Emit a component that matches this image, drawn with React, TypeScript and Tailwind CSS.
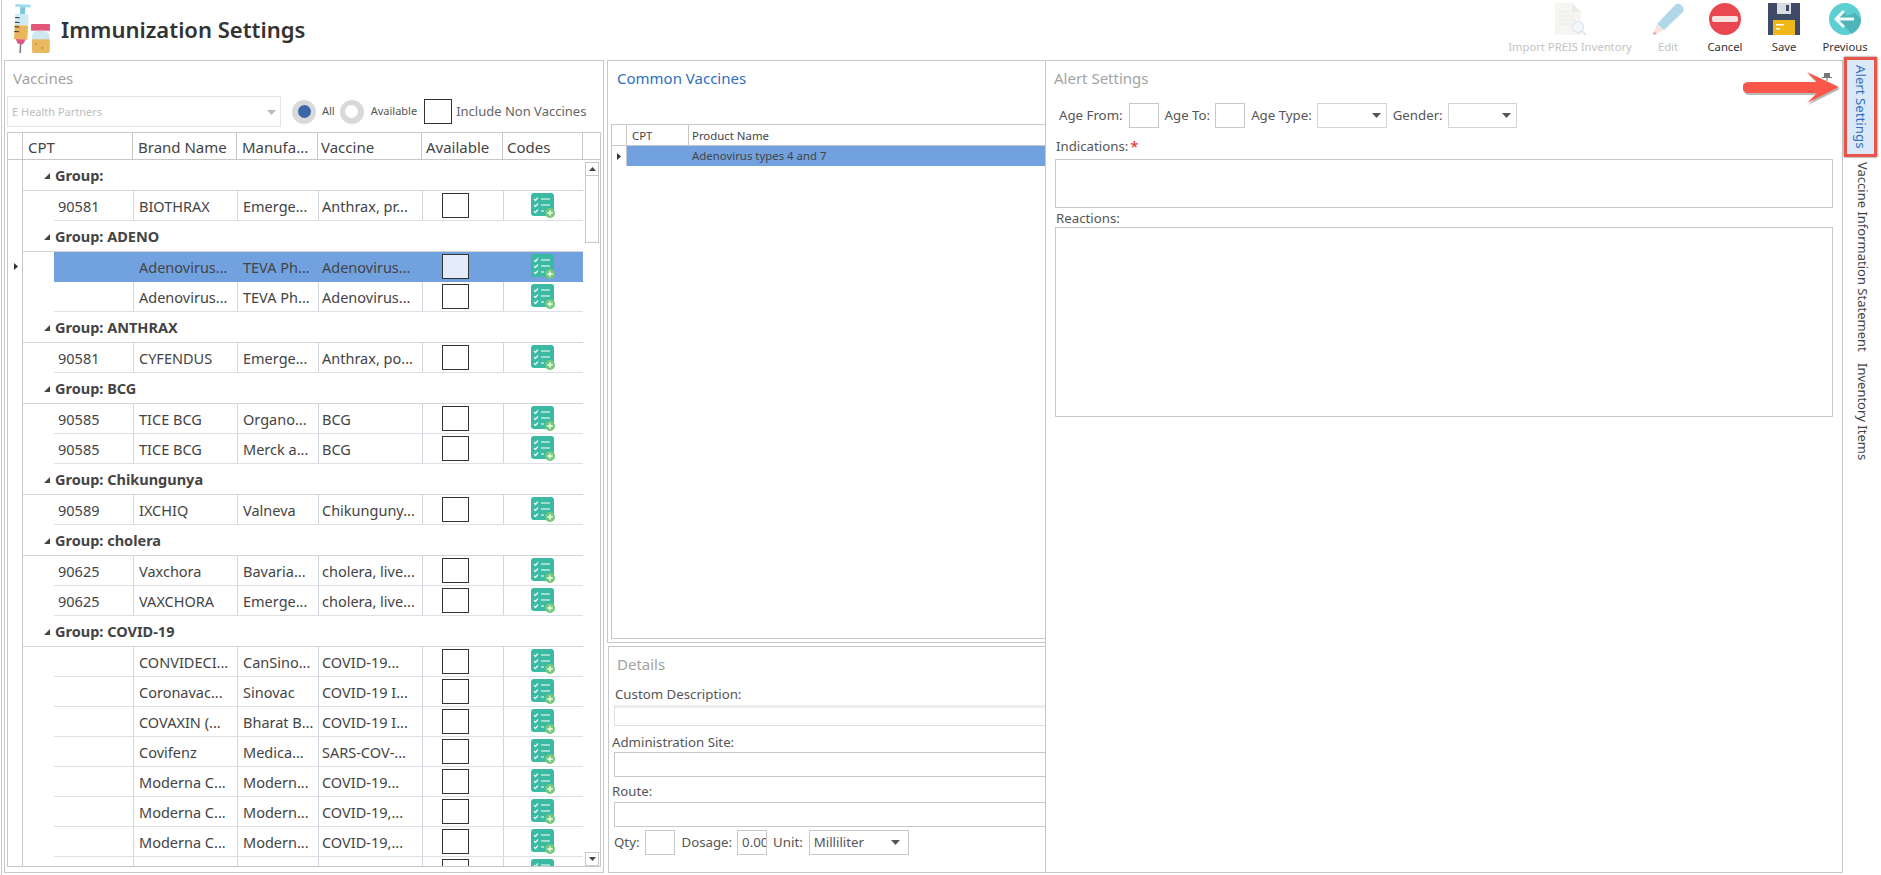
import React from 'react'

type VaccineRow = {
  cpt?: string
  brand: string
  maker: string
  vaccine: string
  selected?: boolean
}

type Section = { group: string; rows: VaccineRow[] }

const sections: Section[] = [
  { group: 'Group:', rows: [{ cpt: '90581', brand: 'BIOTHRAX', maker: 'Emerge...', vaccine: 'Anthrax, pr...' }] },
  {
    group: 'Group: ADENO',
    rows: [
      { brand: 'Adenovirus...', maker: 'TEVA Ph...', vaccine: 'Adenovirus...', selected: true },
      { brand: 'Adenovirus...', maker: 'TEVA Ph...', vaccine: 'Adenovirus...' },
    ],
  },
  { group: 'Group: ANTHRAX', rows: [{ cpt: '90581', brand: 'CYFENDUS', maker: 'Emerge...', vaccine: 'Anthrax, po...' }] },
  {
    group: 'Group: BCG',
    rows: [
      { cpt: '90585', brand: 'TICE BCG', maker: 'Organo...', vaccine: 'BCG' },
      { cpt: '90585', brand: 'TICE BCG', maker: 'Merck a...', vaccine: 'BCG' },
    ],
  },
  { group: 'Group: Chikungunya', rows: [{ cpt: '90589', brand: 'IXCHIQ', maker: 'Valneva', vaccine: 'Chikunguny...' }] },
  {
    group: 'Group: cholera',
    rows: [
      { cpt: '90625', brand: 'Vaxchora', maker: 'Bavaria...', vaccine: 'cholera, live...' },
      { cpt: '90625', brand: 'VAXCHORA', maker: 'Emerge...', vaccine: 'cholera, live...' },
    ],
  },
  {
    group: 'Group: COVID-19',
    rows: [
      { brand: 'CONVIDECI...', maker: 'CanSino...', vaccine: 'COVID-19...' },
      { brand: 'Coronavac...', maker: 'Sinovac', vaccine: 'COVID-19 I...' },
      { brand: 'COVAXIN (...', maker: 'Bharat B...', vaccine: 'COVID-19 I...' },
      { brand: 'Covifenz', maker: 'Medica...', vaccine: 'SARS-COV-...' },
      { brand: 'Moderna C...', maker: 'Modern...', vaccine: 'COVID-19...' },
      { brand: 'Moderna C...', maker: 'Modern...', vaccine: 'COVID-19,...' },
      { brand: 'Moderna C...', maker: 'Modern...', vaccine: 'COVID-19,...' },
      { brand: 'Novavax', maker: 'Novavax', vaccine: 'COVID-19,...' },
    ],
  },
]

function SyringeIcon() {
  return (
    <svg width="55" height="60" viewBox="3 0 165 180" className="shrink-0">
      <g transform="rotate(3 60 80)">
        <rect x="40" y="13" width="46" height="8" fill="#9fdcea" />
        <rect x="55" y="21" width="15" height="22" fill="#7cc7dc" />
        <rect x="41" y="42" width="40" height="34" fill="#cfeaf4" />
        <rect x="41" y="76" width="40" height="42" fill="#e9b65c" />
        <rect x="41" y="52" width="14" height="3" fill="#333" />
        <rect x="41" y="66" width="14" height="3" fill="#333" />
        <rect x="41" y="80" width="14" height="3" fill="#333" />
        <rect x="41" y="94" width="14" height="3" fill="#333" />
        <path d="M46 118h30l-7 14H53z" fill="#e0577f" />
        <rect x="59" y="132" width="5" height="27" fill="#7f7f7f" />
      </g>
      <rect x="90" y="72" width="57" height="20" rx="2" fill="#e4577c" />
      <path d="M100 92h37v5c6 3 9 7 9 14v42a6 6 0 0 1-6 6H99a6 6 0 0 1-6-6v-42c0-7 3-11 7-14z" fill="#cde8f3" />
      <path d="M93 118h53v35a6 6 0 0 1-6 6H99a6 6 0 0 1-6-6z" fill="#e9b85f" />
      <circle cx="106" cy="132" r="3" fill="#c98a35" />
      <circle cx="124" cy="144" r="3" fill="#c98a35" />
    </svg>
  )
}

function ImportIcon() {
  return (
    <svg width="32" height="32" viewBox="0 0 32 32" className="opacity-25">
      <path d="M1 0h17l9 9v23H1z" fill="#ded9cc" />
      <path d="M18 0l9 9h-9z" fill="#bdb8ac" />
      <path d="M5 9h10M5 13h16M5 17h16M5 21h12" stroke="#b8b3a7" strokeWidth="1" />
      <circle cx="24" cy="24" r="5.500" fill="#cfe6f5" stroke="#7da7c7" strokeWidth="1.500" />
      <path d="M28 28l4 4" stroke="#7da7c7" strokeWidth="2" />
    </svg>
  )
}

function PencilIcon() {
  return (
    <svg width="32" height="32" viewBox="0 0 32 32" className="opacity-60">
      <path d="M23 2c2-2 4-2 6 0l2 2c1 2 1 4-1 6L12 27 5 21z" fill="#7dbfdc" />
      <path d="M5 21l7 6-11 5z" fill="#f3d5c4" />
      <path d="M1 32l1-4 3 3z" fill="#d96a6a" />
    </svg>
  )
}

function CancelIcon() {
  return (
    <svg width="32" height="32" viewBox="0 0 32 32">
      <circle cx="16" cy="16" r="16" fill="#ea4850" />
      <rect x="3" y="13" width="26" height="6" rx="2" fill="#f7e3df" />
    </svg>
  )
}

function SaveIcon() {
  return (
    <svg width="32" height="32" viewBox="0 0 32 32">
      <path d="M0 0h32v32H0z" fill="#3f4a66" />
      <path d="M9 0h14v11H9z" fill="#d9dce0" />
      <rect x="18" y="2" width="3" height="6" fill="#3f4a66" />
      <path d="M5 17h22v15H5z" fill="#efb717" />
      <rect x="8" y="21" width="8" height="1.500" fill="#fff" />
      <rect x="8" y="25" width="4" height="1.500" fill="#fff" />
    </svg>
  )
}

function PreviousIcon() {
  return (
    <svg width="32" height="32" viewBox="0 0 32 32">
      <circle cx="16" cy="16" r="16" fill="#5ccfd3" />
      <path d="M16 8l-8 8 15 15a16 16 0 0 0 9-15l-6-6-9 3z" fill="#47a9ae" opacity="0.7" />
      <path d="M15 8l-8 8 8 8M8 16h17" fill="none" stroke="#f2fbfb" strokeWidth="3" />
    </svg>
  )
}

function CodesIcon() {
  return (
    <svg width="24" height="25" viewBox="0 0 24 25" className="shrink-0">
      <rect width="23" height="23" rx="3" fill="#3cb9a2" />
      <path d="M3 6l1.500 1.500L7 4.500M3 12l1.500 1.500L7 10.500M3 18l1.500 1.500L7 16.500" fill="none" stroke="#e6f7f3" strokeWidth="1.200" />
      <path d="M10 6h9M10 12h9M10 18h3" stroke="#bfe9df" strokeWidth="1.600" />
      <circle cx="19" cy="20" r="5" fill="#74c77a" />
      <path d="M16.200 20h5.600M19 17.200v5.600" stroke="#eefaf0" strokeWidth="1.400" />
    </svg>
  )
}

function ComboArrow({ color = '#555' }: { color?: string }) {
  return (
    <svg width="9" height="5" viewBox="0 0 9 5" className="shrink-0">
      <path d="M0 0h9L4.500 5z" fill={color} />
    </svg>
  )
}

function GroupCaret() {
  return (
    <svg width="6" height="6" viewBox="0 0 6 6" className="shrink-0">
      <path d="M6 0v6H0z" fill="#444" />
    </svg>
  )
}

function RowCaret() {
  return (
    <svg width="4" height="7" viewBox="0 0 4 7">
      <path d="M0 0l4 3.500L0 7z" fill="#333" />
    </svg>
  )
}

function ToolButton({ label, width, disabled, children }: { label: string; width: string; disabled?: boolean; children: React.ReactNode }) {
  return (
    <div className={`${width} flex flex-col items-center pt-[3px]`}>
      {children}
      <span className={`mt-[4px] text-[11.250px] leading-[16px] whitespace-nowrap ${disabled ? 'text-[#c3c3c3]' : 'text-[#333]'}`}>{label}</span>
    </div>
  )
}

function Radio({ checked }: { checked?: boolean }) {
  return (
    <span className="flex w-[24px] h-[24px] shrink-0 items-center justify-center rounded-full bg-[#d9d9d9]">
      <span className={`w-[13px] h-[13px] rounded-full ${checked ? 'bg-[#3a66a8]' : 'bg-white'}`} />
    </span>
  )
}

function Row({ row }: { row: VaccineRow }) {
  const line = row.selected ? 'border-[#72a1e0]' : 'border-[#cfd7e0]'
  return (
    <div className={`flex h-[30px] ml-[31px] border-b text-[14.500px] text-[#444] ${row.selected ? 'bg-[#72a1e0] border-[#72a1e0]' : 'border-[#dcdfe3]'}`}>
      <div className="w-[79px] pl-[4px] leading-[30px]">{row.cpt}</div>
      <div className={`w-[104px] border-l pl-[5px] leading-[30px] whitespace-nowrap overflow-hidden ${line}`}>{row.brand}</div>
      <div className={`w-[81px] border-l pl-[5px] leading-[30px] whitespace-nowrap overflow-hidden ${line}`}>{row.maker}</div>
      <div className={`w-[104px] border-l pl-[3px] leading-[30px] whitespace-nowrap overflow-hidden ${line}`}>{row.vaccine}</div>
      <div className={`w-[81px] border-l pl-[19px] pt-[2px] ${line}`}>
        <div className={`w-[27px] h-[25px] border border-[#333] ${row.selected ? 'bg-[#e3ecf8]' : 'bg-white'}`} />
      </div>
      <div className={`w-[80px] border-l pl-[27px] pt-[2px] ${line}`}>
        <CodesIcon />
      </div>
    </div>
  )
}

function VaccinesPanel() {
  return (
    <div className="w-[600px] ml-[2px] border border-[#c8c8c8] flex flex-col px-[2px] pb-[5px]">
      <div className="h-[35px] pl-[6px] pt-[6px] text-[15px] leading-[22px] text-[#a3a3a3]">Vaccines</div>
      <div className="flex items-center h-[31px] text-[11px] text-[#555]">
        <div className="w-[274px] h-[31px] border border-[#e4e4e4] flex items-center justify-between pl-[4px] pr-[4px] pt-[1px] text-[#bdbdbd]">
          <span>E Health Partners</span>
          <ComboArrow color="#bbb" />
        </div>
        <div className="ml-[11px]"><Radio checked /></div>
        <span className="ml-[6px]">All</span>
        <div className="ml-[5px]"><Radio /></div>
        <span className="ml-[7px]">Available</span>
        <div className="ml-[7px] w-[28px] h-[25px] border border-[#333]" />
        <span className="ml-[4px] text-[13px] text-[#666] whitespace-nowrap">Include Non Vaccines</span>
      </div>
      <div className="mt-[5px] flex-1 min-h-0 border border-[#c8c8c8] flex flex-col overflow-hidden">
        <div className="flex h-[27px] shrink-0 border-b border-[#c8c8c8] text-[15px] text-[#444] leading-[29px]">
          <div className="w-[15px] border-r border-[#c8c8c8]" />
          <div className="w-[110px] pl-[5px] border-r border-[#c8c8c8]">CPT</div>
          <div className="w-[104px] pl-[5px] border-r border-[#c8c8c8]">Brand Name</div>
          <div className="w-[81px] pl-[5px] border-r border-[#c8c8c8]">Manufa...</div>
          <div className="w-[104px] pl-[3px] border-r border-[#c8c8c8]">Vaccine</div>
          <div className="w-[81px] pl-[4px] border-r border-[#c8c8c8]">Available</div>
          <div className="w-[80px] pl-[4px] border-r border-[#c8c8c8]">Codes</div>
        </div>
        <div className="flex flex-1 min-h-0">
          <div className="w-[15px] shrink-0 border-r border-[#c8c8c8] pt-[103px] pl-[6px]">
            <RowCaret />
          </div>
          <div className="w-[560px] shrink-0 overflow-hidden">
            {sections.map((section) => (
              <div key={section.group}>
                <div className="flex items-center h-[31px] border-b border-[#d5d5d5] pl-[21px] pt-[2px] gap-[5px] text-[14.500px] font-bold text-[#444]">
                  <GroupCaret />
                  <span>{section.group}</span>
                </div>
                {section.rows.map((row, i) => (
                  <Row key={i} row={row} />
                ))}
              </div>
            ))}
          </div>
          <div className="w-[16px] shrink-0 flex flex-col pl-[2px] pt-[2px]">
            <div className="h-[14px] border border-[#c8c8c8] flex items-center justify-center">
              <svg width="7" height="4" viewBox="0 0 7 4"><path d="M3.500 0L7 4H0z" fill="#444" /></svg>
            </div>
            <div className="h-[67px] border border-t-0 border-[#c8c8c8]" />
            <div className="flex-1" />
            <div className="h-[14px] border border-[#c8c8c8] flex items-center justify-center">
              <svg width="7" height="4" viewBox="0 0 7 4"><path d="M0 0h7L3.500 4z" fill="#444" /></svg>
            </div>
          </div>
        </div>
      </div>
    </div>
  )
}

function MiddlePanel() {
  return (
    <div className="w-[438px] ml-[3px] flex flex-col">
      <div className="h-[583px] border border-r-0 border-[#c8c8c8] pl-[3px] pb-[3px] flex flex-col">
        <div className="h-[63px] pl-[6px] pt-[6px] text-[15px] leading-[22px] text-[#2e6fc0]">Common Vaccines</div>
        <div className="flex-1 border border-r-0 border-[#c8c8c8] text-[11.400px] text-[#444]">
          <div className="flex h-[21px] border-b border-[#c8c8c8] leading-[22px]">
            <div className="w-[15px] border-r border-[#c8c8c8]" />
            <div className="w-[62px] pl-[5px] border-r border-[#c8c8c8]">CPT</div>
            <div className="pl-[3px]">Product Name</div>
          </div>
          <div className="flex h-[20px] leading-[20px]">
            <div className="w-[15px] border-r border-[#c8c8c8] flex items-center justify-center">
              <RowCaret />
            </div>
            <div className="flex-1 bg-[#72a1e0] pl-[65px]">Adenovirus types 4 and 7</div>
          </div>
        </div>
      </div>
      <div className="mt-[3px] flex-1 border border-r-0 border-[#c8c8c8] ml-[1px] text-[13.250px] text-[#555] flex flex-col">
        <div className="h-[37px] pl-[8px] pt-[6px] text-[15px] leading-[22px] text-[#a3a3a3]">Details</div>
        <div className="pl-[6px] leading-[20px] h-[21px]">Custom Description:</div>
        <div className="ml-[5px] h-[21px] border border-[#dedede] border-t-[3px] border-t-[#eeeeee] border-r-0" />
        <div className="pl-[3px] mt-[6px] leading-[20px] h-[20px]">Administration Site:</div>
        <div className="ml-[5px] h-[25px] border border-r-0 border-[#c8c8c8]" />
        <div className="pl-[3px] mt-[4px] leading-[20px] h-[21px]">Route:</div>
        <div className="ml-[5px] h-[25px] border border-r-0 border-[#c8c8c8]" />
        <div className="flex items-center h-[25px] mt-[3px] ml-[5px]">
          <span>Qty:</span>
          <div className="ml-[6px] w-[30px] h-[25px] border border-[#c8c8c8]" />
          <span className="ml-[6px]">Dosage:</span>
          <div className="ml-[5px] w-[30px] h-[25px] border border-[#c8c8c8] pl-[4px] leading-[23px] overflow-hidden whitespace-nowrap">0.00</div>
          <span className="ml-[6px]">Unit:</span>
          <div className="ml-[6px] w-[100px] h-[25px] border border-[#c8c8c8] flex items-center justify-between pl-[4px] pr-[8px]">
            <span>Milliliter</span>
            <ComboArrow />
          </div>
        </div>
      </div>
    </div>
  )
}

function AlertPanel() {
  return (
    <div className="w-[798px] border border-[#c8c8c8] text-[13.250px] text-[#555] flex flex-col">
      <div className="h-[42px] pl-[8px] pt-[6px] text-[15px] leading-[22px] text-[#a3a3a3]">Alert Settings</div>
      <div className="flex items-center h-[25px] pl-[13px]">
        <span>Age From:</span>
        <div className="ml-[6px] w-[30px] h-[25px] border border-[#c8c8c8]" />
        <span className="ml-[6px]">Age To:</span>
        <div className="ml-[5px] w-[30px] h-[25px] border border-[#c8c8c8]" />
        <span className="ml-[6px]">Age Type:</span>
        <div className="ml-[5px] w-[70px] h-[25px] border border-[#d4d4d4] flex items-center justify-end pr-[5px]"><ComboArrow /></div>
        <span className="ml-[6px]">Gender:</span>
        <div className="ml-[5px] w-[69px] h-[25px] border border-[#d4d4d4] flex items-center justify-end pr-[5px]"><ComboArrow /></div>
      </div>
      <div className="mt-[6px] h-[25px] pl-[10px] leading-[24px] flex">
        Indications:<span className="ml-[2px] text-[15px] text-[#e8232a]">*</span>
      </div>
      <div className="ml-[9px] w-[778px] h-[49px] border border-[#c8c8c8]" />
      <div className="pl-[10px] h-[19px] leading-[20px]">Reactions:</div>
      <div className="ml-[9px] w-[778px] h-[190px] border border-[#c8c8c8]" />
    </div>
  )
}

function SideTabs() {
  return (
    <div className="w-[36px] -mt-[3px] ml-[1px] text-[13px] text-[#444] flex flex-col relative z-10">
      <div className="w-[33px] h-[100px] border-[3px] border-[#e8534a] bg-[#dbe8f8] text-[13.250px] text-[#2e6fc0] flex items-center justify-center [writing-mode:vertical-rl] shadow-[0_0_2px_#555]">
        Alert Settings
      </div>
      <div className="mt-[5px] pr-[8px] h-[188px] [writing-mode:vertical-rl] whitespace-nowrap">Vaccine Information Statement</div>
      <div className="mt-[13px] pr-[8px] [writing-mode:vertical-rl] whitespace-nowrap">Inventory Items</div>
    </div>
  )
}

export default function App() {
  return (
    <div className="relative ml-[1px] w-[1880px] h-[875px] overflow-hidden border-l border-[#cccccc] bg-white flex flex-col font-['Noto_Sans',sans-serif]">
      <div className="h-[60px] shrink-0 flex">
        <SyringeIcon />
        <div className="ml-[4px] text-[22px] leading-[58px] font-semibold text-[#333] whitespace-nowrap">Immunization Settings</div>
        <div className="ml-auto flex">
          <ToolButton label="Import PREIS Inventory" width="w-[150px]" disabled><ImportIcon /></ToolButton>
          <ToolButton label="Edit" width="w-[46px]" disabled><PencilIcon /></ToolButton>
          <ToolButton label="Cancel" width="w-[68px]"><CancelIcon /></ToolButton>
          <ToolButton label="Save" width="w-[50px]"><SaveIcon /></ToolButton>
          <ToolButton label="Previous" width="w-[72px]"><PreviousIcon /></ToolButton>
        </div>
      </div>
      <div className="flex h-[813px] shrink-0">
        <VaccinesPanel />
        <MiddlePanel />
        <AlertPanel />
        <SideTabs />
      </div>
      {/* callout arrow and pin sit on top of the alert panel */}
      <svg width="100" height="40" viewBox="0 0 100 40" className="absolute left-[1741px] top-[68px]">
        <path d="M5 14H74L64 4L96 19L64 35L74 25H5a5.500 5.500 0 0 1 0-11z" fill="#333" opacity="0.35" transform="translate(1 2)" />
        <path d="M5 14H74L64 4L96 19L64 35L74 25H5a5.500 5.500 0 0 1 0-11z" fill="#f9574a" />
      </svg>
      <svg width="10" height="9" viewBox="0 0 10 9" className="absolute left-[1820px] top-[72px]">
        <path d="M2 1h6v4H2zM0 5h10v1H0z" fill="#777" />
        <rect x="4.500" y="6" width="1" height="3" fill="#777" />
      </svg>
    </div>
  )
}
